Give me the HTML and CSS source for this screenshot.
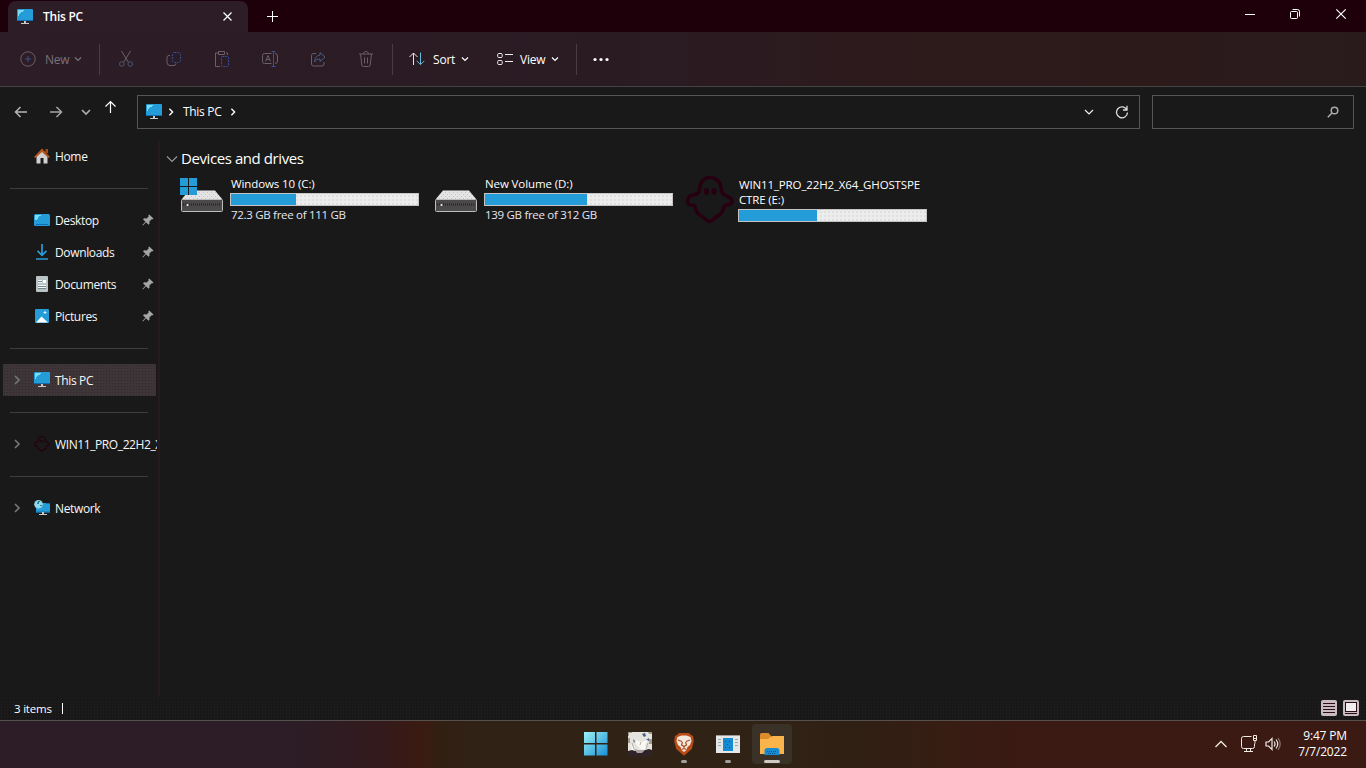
FILE: index.html
```html
<!DOCTYPE html>
<html lang="en">
<head>
<meta charset="utf-8">
<title>This PC</title>
<link rel="stylesheet" href="styles.css">
</head>
<body>
<svg class="defs" width="0" height="0">
  <defs>
    <pattern id="dots" width="4" height="4" patternUnits="userSpaceOnUse"><path d="M0 0h1v1H0zM2 2h1v1H2z" fill="#aaa"/></pattern>
    <symbol id="pc" viewBox="0 0 16 16"><rect x="0" y="0" width="16" height="12" rx="1" fill="#239cd8"/><path d="M0 11h16v1H0z" fill="#126db0"/><path d="M1 1h6v1H6v1H4v1H3v1H2v2H1z" fill="#79dcf0"/><path d="M7 12h2v2h3v1H4v-1h3z" fill="#c9c9c9"/></symbol>
    <symbol id="chev" viewBox="0 0 8 8"><path d="M1 2.500l3 3 3-3" fill="none" stroke="currentColor" stroke-width="1.200"/></symbol>
    <symbol id="right" viewBox="0 0 8 10"><path d="M2 1l4 4-4 4" fill="none" stroke="currentColor" stroke-width="1.700"/></symbol>
    <symbol id="pin" viewBox="0 0 12 12"><path d="M7.200.5l4.300 4-1.200 1.100-.9-.2-2 2 .1 2.300-1 1L4 8.200 1 11.500l-.6-.5 3-3.300L1 5.300l1-1 2.500.2 2.200-2.100-.4-.9z" fill="#a5a5a5"/></symbol>
    <symbol id="ghost" viewBox="0 0 48 48"><path d="M24 1.500c-7 0-10 5-10.500 11.500C13 19 9 18 5 19.500c-4 2-4 7-2 9 2 1 5 0 6 2 1 3 0 5 4 8 4 2 6 5 9 6.500 3 1 5-1 7-3 3-3 6-3 7-6 2-3 1-6 4-7 4 0 6-1 6-4 0-4-5-4-8-6.500-4-3-2-6-4-11C32 4 29 1.500 24 1.500z" fill="none" stroke="#260010" stroke-width="3.500"/><ellipse cx="20.500" cy="15.500" rx="2.700" ry="3.400" fill="#260010"/><ellipse cx="28" cy="15.500" rx="2.700" ry="3.400" fill="#260010"/></symbol>
    <symbol id="drive" viewBox="0 0 42 22"><path d="M8 .5h26l7.500 9H.5z" fill="#e4e4e4"/><path d="M8 .5h26l7.500 9H.5z" fill="url(#dots)" opacity=".6"/><rect x=".5" y="9.500" width="41" height="12" rx="1" fill="#4b4949" stroke="#bdbdbd"/><path d="M2 14.500h38" stroke="#262626" stroke-width="2" stroke-dasharray="1 1"/><circle cx="6.500" cy="15" r="1" fill="#fff"/></symbol>
  </defs>
</svg>

<header class="titlebar">
  <div class="tab">
    <svg class="i16"><use href="#pc"/></svg>
    <span class="tab-name">This PC</span>
    <svg class="tab-x" width="11" height="11" viewBox="0 0 11 11"><path d="M1.500 1.500l8 8M9.500 1.500l-8 8" stroke="#fff" stroke-width="1.200"/></svg>
  </div>
  <svg class="tab-add" width="11" height="11" viewBox="0 0 11 11"><path d="M5.500 0v11M0 5.500h11" stroke="#fff"/></svg>
  <div class="controls">
    <svg width="12" height="12" viewBox="0 0 12 12"><path d="M2 6.500h10" stroke="#fff"/></svg>
    <svg width="12" height="12" viewBox="0 0 12 12"><rect x="1.500" y="3.500" width="7" height="7" rx="1" fill="none" stroke="#fff"/><path d="M3.500 1.500h5a2 2 0 0 1 2 2v5" fill="none" stroke="#fff"/></svg>
    <svg width="12" height="12" viewBox="0 0 12 12"><path d="M1.300 1.300l9.400 9.400M10.700 1.300l-9.400 9.400" stroke="#fff" stroke-width="1.200"/></svg>
  </div>
</header>

<div class="toolbar">
  <div class="new dim">
    <svg width="16" height="16" viewBox="0 0 16 16" fill="none"><circle cx="8" cy="8" r="7.200" stroke="#6b6067"/><path d="M8 5v6M5 8h6" stroke="#3a5387"/></svg>
    <span class="cmd">New</span><svg class="i8"><use href="#chev"/></svg>
  </div>
  <i class="vsep"></i>
  <div class="tools">
    <svg viewBox="0 0 16 18"><g fill="none" stroke="#6b6067"><path d="M3.500 1l6.700 11M12.500 1L5.800 12"/></g><g fill="none" stroke="#4f5579"><circle cx="3.800" cy="14" r="2.300"/><circle cx="12.200" cy="14" r="2.300"/></g></svg>
    <svg viewBox="0 0 16 18" fill="none"><path d="M4 5.500H3a2 2 0 0 0-2 2v5a3 3 0 0 0 3 3h4a2 2 0 0 0 2-2" stroke="#6b6067"/><rect x="6.500" y="2.500" width="8" height="10" rx="2" stroke="#34519a" stroke-dasharray="2 1"/></svg>
    <svg viewBox="0 0 16 18" fill="none"><path d="M4 3H1.500v13.500H6M12 3h1.500v2M4.500 1.500h6v3h-6z" stroke="#6b6067"/><rect x="7.500" y="6.500" width="7" height="10" rx="1" stroke="#34519a" stroke-dasharray="2 1"/></svg>
    <svg viewBox="0 0 16 18" fill="none"><path d="M9.500 3.500H2.500a2 2 0 0 0-2 2v6a2 2 0 0 0 2 2h7M13 3.500a2.500 2.500 0 0 1 2.500 2.500v5a2.500 2.500 0 0 1-2.500 2.500M3.500 11.500l2.500-6 2.500 6M4.500 9.500h3" stroke="#6b6067"/><path d="M9.500 1.500h4M9.500 16.500h4M11.500 1.500v15" stroke="#34519a"/></svg>
    <svg viewBox="0 0 16 18" fill="none"><path d="M6 3.500H3.500a2 2 0 0 0-2 2V14a2 2 0 0 0 2 2H12a2 2 0 0 0 2-2v-2" stroke="#6b6067"/><path d="M10 2.500l5 4.500-5 4.500V9c-3 0-4.500 1-5.500 3 .3-4 2-6.500 5.500-7z" stroke="#485c84"/></svg>
    <svg viewBox="0 0 16 18" fill="none" stroke="#6b6067"><path d="M1 4h14M5.500 4c0-3.300 5-3.300 5 0M2.500 4l1.300 11q.2 1.500 1.700 1.500h5q1.500 0 1.700-1.500L13.500 4M6.500 7.500v6M9.500 7.500v6"/></svg>
  </div>
  <i class="vsep"></i>
  <div class="sort">
    <svg width="16" height="16" viewBox="0 0 16 16" fill="none"><path d="M4.500 14V2M.5 6l4-4 4 4" stroke="#e8e4e8"/><path d="M11.500 1.500v12M7.700 9.800l3.800 3.800 3.800-3.800" stroke="#63bdd8"/></svg>
    <span class="cmd">Sort</span><svg class="i8"><use href="#chev"/></svg>
  </div>
  <div class="view">
    <svg width="16" height="16" viewBox="0 0 16 16" fill="none" stroke="#eee"><rect x=".7" y="2.500" width="4.500" height="4" rx="1"/><rect x=".7" y="9.500" width="4.500" height="4" rx="1"/><path d="M8 3.500h8M8 10.500h8"/></svg>
    <span class="cmd">View</span><svg class="i8"><use href="#chev"/></svg>
  </div>
  <i class="vsep"></i>
  <svg class="more" width="18" height="6" viewBox="0 0 18 6" fill="#fff"><circle cx="3" cy="3.500" r="1.600"/><circle cx="9" cy="3.500" r="1.600"/><circle cx="15" cy="3.500" r="1.600"/></svg>
</div>

<nav class="navbar">
  <div class="arrows">
    <svg width="14" height="14" viewBox="0 0 14 14"><path d="M13 7H1.500M6.500 2l-5 5 5 5" fill="none" stroke="#b5b5b5" stroke-width="1.500"/></svg>
    <svg width="14" height="14" viewBox="0 0 14 14"><path d="M1 7h11.500M7.500 2l5 5-5 5" fill="none" stroke="#a5a5a5" stroke-width="1.500"/></svg>
    <svg class="recent" width="10" height="10" viewBox="0 0 10 10"><path d="M1 3l4 4 4-4" fill="none" stroke="#b0b0b0" stroke-width="1.600"/></svg>
    <svg class="up" width="12" height="14" viewBox="0 0 12 14"><path d="M6.500 13V1.500M1.500 6.500l5-5 5 5" fill="none" stroke="#fff" stroke-width="1.200"/></svg>
  </div>
  <div class="address">
    <svg class="i16"><use href="#pc"/></svg>
    <svg class="crumb"><use href="#right"/></svg>
    <span class="addr-text">This PC</span>
    <svg class="crumb"><use href="#right"/></svg>
    <svg class="addr-down" width="10" height="10" viewBox="0 0 10 10"><path d="M1 3l4 4 4-4" fill="none" stroke="#eee" stroke-width="1.200"/></svg>
    <svg width="14" height="14" viewBox="0 0 14 14"><path d="M12 5A5.500 5.500 0 1 0 12.500 7.500M12 .8V5H8" fill="none" stroke="#ddd" stroke-width="1.300"/></svg>
  </div>
  <div class="search"><svg width="12" height="12" viewBox="0 0 12 12"><circle cx="7.500" cy="4.500" r="3.300" fill="none" stroke="#aaa" stroke-width="1.500"/><path d="M5 7L.8 11.200" stroke="#aaa" stroke-width="1.600"/></svg></div>
</nav>

<div class="body">
  <aside class="side">
    <div class="row"><svg class="i16" viewBox="0 0 16 16"><path d="M2.500 8L8 3l5.500 5v7.500h-4V10h-3v5.500h-4z" fill="#d0d0d0"/><path d="M0 9l8-8.500 8 8.500-1.500 1L8 4 1.500 10z" fill="#b4561d"/><path d="M11.500 1H14v4h-2.500z" fill="#a34a18"/></svg><span>Home</span></div>
    <div class="line"></div>
    <div class="row"><svg class="i16" viewBox="0 0 16 16"><rect x="0" y="2" width="16" height="12" rx="1.500" fill="#239cd8"/><path d="M1 3h6v1H5v1H4v2H3v1H1z" fill="#79dcf0"/><path d="M2 12.500h12" stroke="#126db0"/></svg><span>Desktop</span><svg class="pin"><use href="#pin"/></svg></div>
    <div class="row"><svg class="i16" viewBox="0 0 16 16"><path d="M8 0v11M3.500 6.800L8 11.300l4.500-4.500M2 15h12" fill="none" stroke="#2b9bd8" stroke-width="1.700"/></svg><span>Downloads</span><svg class="pin"><use href="#pin"/></svg></div>
    <div class="row"><svg class="i16" viewBox="0 0 16 16"><rect x="2" y="0" width="12" height="16" rx="1" fill="#b9c3c6"/><path d="M4 4.500h4M4 6.500h4M4 9.500h8M4 11.500h8" stroke="#f4f7f8"/><path d="M4 5.500h4M4 10.500h8M4 12.500h8" stroke="#75858b"/><rect x="9" y="4" width="3" height="3" fill="#fff"/></svg><span>Documents</span><svg class="pin"><use href="#pin"/></svg></div>
    <div class="row"><svg class="i16" viewBox="0 0 16 16"><rect x="1" y="1" width="14" height="14" rx="1" fill="#239cd8"/><path d="M2 14.500l5.500-6 6.500 6z" fill="#fff"/><path d="M11 3v3M9.500 4.500h3" stroke="#d7f4ff"/></svg><span>Pictures</span><svg class="pin"><use href="#pin"/></svg></div>
    <div class="line"></div>
    <div class="row sel"><svg class="exp"><use href="#right"/></svg><svg class="i16"><use href="#pc"/></svg><span>This PC</span></div>
    <div class="line"></div>
    <div class="row"><svg class="exp"><use href="#right"/></svg><svg class="i16"><use href="#ghost"/></svg><span class="long">WIN11_PRO_22H2_X64</span></div>
    <div class="line"></div>
    <div class="row"><svg class="exp"><use href="#right"/></svg><svg class="i16" viewBox="0 0 16 16"><path d="M2 3h14v9.500H2z" fill="#239cd8"/><path d="M2 11.500h14v1H2zM12 3h4v1h-4z" fill="#126db0"/><path d="M8 12h2v2h3v1H5v-1h3z" fill="#c9c9c9"/><circle cx="4.500" cy="4.300" r="4.300" fill="#8fd9e6"/><path d="M4 1h2v1H5v2H3zM6 5h2v1H6z" fill="#2a7998"/></svg><span>Network</span></div>
  </aside>
  <main class="content">
    <h2 class="group"><svg width="12" height="12" viewBox="0 0 12 12"><path d="M1 3.500l5 5 5-5" fill="none" stroke="#999" stroke-width="1.100"/></svg><span>Devices and drives</span></h2>
    <div class="drives">
      <section class="drive">
        <svg class="dicon" viewBox="0 0 48 48"><use href="#drive" x="1" y="14" width="42" height="22"/><path d="M0 2h17v17H0z" fill="#239cd8"/><path d="M8.500 2v17M0 10.500h17" stroke="#191919"/></svg>
        <div class="info"><div class="name">Windows 10 (C:)</div><div class="bar"><i style="width:35%"></i></div><div class="free">72.3 GB free of 111 GB</div></div>
      </section>
      <section class="drive">
        <svg class="dicon" viewBox="0 0 48 48"><use href="#drive" x="1" y="14" width="42" height="22"/></svg>
        <div class="info"><div class="name">New Volume (D:)</div><div class="bar"><i style="width:54.500%"></i></div><div class="free">139 GB free of 312 GB</div></div>
      </section>
      <section class="drive ghost">
        <svg class="dicon"><use href="#ghost"/></svg>
        <div class="info"><div class="name caps">WIN11_PRO_22H2_X64_GHOSTSPE<br>CTRE (E:)</div><div class="bar"><i style="width:41.700%"></i></div></div>
      </section>
    </div>
  </main>
</div>

<footer class="status">
  <span class="count">3 items</span><i class="caret"></i>
  <div class="modes">
    <svg width="16" height="16" viewBox="0 0 16 16"><rect width="16" height="16" rx="2" fill="#c9bcc0"/><path d="M2 3.500h12M2 6.500h12M2 9.500h12M2 12.500h12" stroke="#2b0c18"/></svg>
    <svg width="16" height="16" viewBox="0 0 16 16"><rect width="16" height="16" rx="2" fill="#c9bcc0"/><rect x="2.500" y="2.500" width="11" height="9" fill="#f2eef0" stroke="#2b0c18"/><path d="M2 13.500h12" stroke="#2b0c18"/></svg>
  </div>
</footer>

<div class="taskbar">
  <div class="apps">
    <div class="app"><svg width="24" height="24" viewBox="0 0 24 24"><defs><linearGradient id="win" x1="0" y1="0" x2="1" y2="1"><stop offset="0" stop-color="#9df2f6"/><stop offset="1" stop-color="#168fd5"/></linearGradient></defs><path d="M0 0h11v11H0zM12.500 0h11v11h-11zM0 12.500h11v11H0zM12.500 12.500h11v11h-11z" fill="url(#win)"/></svg></div>
    <div class="app"><svg width="24" height="24" viewBox="0 0 24 24"><rect width="24" height="24" fill="#e6e4df"/><path d="M0 0h4v1H1v3H0zM0 6h2v5H0zM21 7h3v5h-3zM20 0h4v2h-3z" fill="#a19d95"/><path d="M14 2l3-1 1 3-2 1zM18 8l3-2v3zM5 7l2 2-1 2z" fill="#4a5f88"/><path d="M3 12l5 5-4 2zM8 8l5 2 7-2-3 5 2 5-7-1-4-5z" fill="#fbf9f4"/><path d="M4 11l2 6 3 1M13 10l-1 3M20 11l-2 6" fill="none" stroke="#b5afa9"/><path d="M0 19l4-1 3 1 10-1 4-1 3 1v6H0z" fill="#302229"/><path d="M7 18h10l-3 3H9z" fill="#a8a0a2"/></svg></div>
    <div class="app run"><svg width="20" height="24" viewBox="0 0 20 24"><path d="M5 1h10l2 2 2 1 .8 5-2 8L10 23.800 2.200 17 .2 9 1 4l2-1z" fill="#b84b16"/><path d="M3.500 5l4-1.500h5l4 1.500 1 4-1.500 4-2.500 2-1 3-2.500 2-2.500-2-1-3L4 13 2.500 9z" fill="#f3e8dd"/><path d="M4 8l4 1.500M16 8l-4 1.500M8.500 10L7.500 13l2.500 1.500 2.500-1.500-1-3M10 14.500v2M7.500 17.500l2.500-1 2.500 1" fill="none" stroke="#a7481f" stroke-width="1.200"/></svg></div>
    <div class="app run"><svg width="24" height="18" viewBox="0 0 24 18"><rect width="24" height="18" fill="#e4e6e8"/><path d="M0 .5h24" stroke="#999"/><rect x="7" y="3" width="10" height="13" fill="#168bd2"/><path d="M2 4.500h3M2 7.500h3M2 10.500h3M19 4.500h3M19 7.500h3M19 10.500h3" stroke="#9aa"/><path d="M9 6h1v1H9zM13 6h1v1h-1zM11 9h1v1h-1zM9 12h1v1H9zM13 12h1v1h-1z" fill="#0a4f91"/></svg></div>
    <div class="app run on"><svg width="24" height="22" viewBox="0 0 24 22"><path d="M0 1.500Q0 0 1.500 0h7L11 3v5H0z" fill="#e08b2a"/><path d="M0 6h8l4-3h12v18H0z" fill="#f9b54b"/><path d="M4.500 22v-4q0-3 3-3h9q3 0 3 3v4z" fill="#168bd2"/><path d="M7 18.500h10M8 20.500h8" stroke="#0a5897" stroke-dasharray="1 1"/></svg></div>
  </div>
  <div class="tray">
    <svg class="t-up" width="14" height="10" viewBox="0 0 14 10"><path d="M1.500 8L7 2.500 12.500 8" fill="none" stroke="#f2ebe4" stroke-width="1.300"/></svg>
    <svg class="t-net" width="17" height="18" viewBox="0 0 17 18" fill="none" stroke="#f2ebe4"><path d="M10.500 1.500h-8q-2 0-2 2v8q0 2 2 2h9q2 0 2-2v-3M3 16.500h9M5.500 13.500v3M9.500 13.500v3M12.500.5h3v5h-3zM12.500 3.500h3M14 5.500v3"/></svg>
    <svg class="t-vol" width="16" height="14" viewBox="0 0 16 14" fill="none" stroke="#f2ebe4" stroke-width="1.200"><path d="M1 5h2.500L7 1.500v11L3.500 9H1zM9 4.500q2 2.500 0 5M11 2.500q3.500 4.500 0 9"/><path d="M13 1q4.500 6 0 12" stroke="#8c766c"/></svg>
    <div class="clock"><div>9:47 PM</div><div>7/7/2022</div></div>
  </div>
</div>
</body>
</html>
```
FILE: styles.css
```css
* { box-sizing: border-box; }
body {
  margin: 0; width: 1366px; height: 768px; overflow: hidden;
  display: flex; flex-direction: column;
  background: #191919; color: #fff;
  font: 12px/16px "Open Sans", "Noto Sans", sans-serif;
}
svg { flex: none; display: block; }
.defs { position: absolute; }
.i16 { width: 16px; height: 16px; }
.i8 { width: 8px; height: 8px; }
span { white-space: nowrap; }

.titlebar {
  height: 32px; display: flex; flex: none;
  background: radial-gradient(circle, #2b0b12 .5px, transparent .7px) 0 0 / 4px 4px, #1e000b;
}
.tab {
  width: 240px; height: 31px; margin: 1px 0 0 8px; padding: 0 15px 0 9px;
  border-radius: 8px 8px 0 0; background: #2c1d26;
  display: flex; align-items: center;
}
.tab-name { margin: 1px 0 0 10px; font-weight: 600; letter-spacing: -.25px; width: 60px; }
.tab-x { margin-left: auto; }
.tab-add { margin: 11px 0 0 19px; }
.controls { display: flex; gap: 34px; margin: 8px 19px 0 auto; }

.toolbar {
  height: 55px; flex: none; display: flex; align-items: center;
  background: linear-gradient(90deg, #2c1d26, #2a1b23 45%, #2c1a1c 65%, #2c1a1b 85%, #291b1c);
  border-bottom: 1px solid #444;
}
.vsep { width: 1px; height: 31px; background: #493d44; flex: none; }
.new, .sort, .view { display: flex; align-items: center; flex: none; }
.new { width: 99px; padding-left: 20px; }
.dim { color: #7c7178; }
.cmd { width: 24px; margin: 2px 5px 0 9px; letter-spacing: -.2px; font-weight: 500; }
.tools { width: 292px; padding-left: 18px; display: flex; gap: 32px; }
.tools svg { width: 16px; height: 18px; }
.sort { width: 87px; padding-left: 16px; }
.sort .cmd { width: 23px; margin-left: 8px; }
.view { width: 96px; padding-left: 17px; }
.view .cmd { width: 27px; margin-left: 7px; margin-right: 4px; }
.more { margin-left: 15px; }

.navbar { height: 53px; flex: none; display: flex; padding-top: 8px; }
.arrows { width: 137px; height: 34px; padding-left: 14px; display: flex; align-items: center; }
.arrows svg + svg { margin-left: 21px; }
.arrows .recent { margin-left: 18px; }
.arrows .up { margin: 0 0 10px 13px; }
.address {
  width: 1003px; height: 34px; border: 1px solid #555; padding: 0 10px 0 8px;
  display: flex; align-items: center; letter-spacing: -.3px;
}
.crumb { width: 8px; height: 8px; }
.address .i16 { margin-right: 5px; }
.addr-text { margin: 0 6px 0 8px; width: 40px; }
.addr-down { margin: 0 21px 0 auto; }
.search {
  width: 202px; height: 34px; margin-left: 12px; border: 1px solid #555;
  display: flex; align-items: center; justify-content: flex-end; padding-right: 14px;
}

.body { height: 557px; display: flex; flex: none; }
.side { width: 160px; border-right: 2px solid #271a1c; }
.row { height: 32px; display: flex; align-items: center; padding-left: 34px; color: #f7f7f7; }
.row .i16 { margin-right: 5px; }
.row span { letter-spacing: -.35px; padding-top: 1px; }
.row .long { width: 102px; overflow: hidden; letter-spacing: -.4px; }
.row:has(.exp) { padding-left: 13px; }
.exp { width: 8px; height: 10px; margin-right: 13px; color: #757575; }
.pin { width: 12px; height: 12px; margin: 0 4px 0 auto; }
.line { height: 32px; padding: 16px 10px 0 10px; }
.line::before { content: ""; display: block; height: 1px; background: #3e3e3e; }
.sel {
  width: 153px; margin-left: 3px; height: 32px;
  background: radial-gradient(circle, #2f292c .6px, transparent .8px) 0 0 / 3px 3px, #3d3538;
}
.row:has(.exp).sel { padding-left: 10px; }

.content { flex: 1; padding: 9px 0 0 6px; }
.group { margin: 0; height: 18px; display: flex; align-items: center; font-size: 15px; font-weight: 400; }
.group span { margin-left: 3px; letter-spacing: -.42px; }
.group svg { margin-top: 2px; }
.drives { display: flex; margin: 9px 0 0 14px; }
.drive { width: 254px; display: flex; }
.dicon { width: 48px; height: 48px; }
.ghost .dicon { margin-left: -2px; margin-right: 2px; }
.info { width: 189px; margin-left: 2px; }
.name, .free { padding-left: 1px; font-size: 11.5px; line-height: 15px; white-space: nowrap; letter-spacing: -.1px; }
.name { height: 17px; }
.caps { height: 33px; padding-top: 1px; letter-spacing: -.14px; }
.bar { height: 13px; border: 1px solid #c4c4c4; background: radial-gradient(circle, #c4c4c4 .5px, transparent .8px) 0 0 / 4px 4px, #ececec; }
.bar i { display: block; height: 100%; background: #239cd8; }
.free { padding-top: 1px; color: #e6e6f0; letter-spacing: -.3px; }

.status {
  height: 24px; flex: none; display: flex; align-items: center; padding: 0 7px 0 14px;
  background: radial-gradient(circle, #261f24 .5px, transparent .8px) 0 0 / 3px 3px, #191819;
  border-bottom: 1px solid #55504e;
}
.count { width: 48px; letter-spacing: -.2px; font-size: 11.5px; }
.caret { width: 1px; height: 11px; background: #fff; }
.modes { display: flex; gap: 6px; margin: 0 0 1px auto; }

.taskbar {
  height: 47px; flex: none; display: flex; justify-content: flex-end;
  background: linear-gradient(90deg, #2c1d26 0, #2c1d26 290px, #301b21 350px, #351a1a 385px, #3a1b13 415px, #3a1c13 427px, #321f13 437px, #302214 470px, #302214 800px, #301f14 865px, #381d13 950px, #3a1a13 1020px, #3a1a13);
}
.apps { display: flex; gap: 4px; margin: 3px auto 0 575.5px; }
.app { width: 40px; height: 40px; border-radius: 4px; display: flex; align-items: center; justify-content: center; position: relative; }
.on { background: #3a3226; }
.run::after { content: ""; position: absolute; left: 17px; bottom: 1px; width: 6px; height: 3px; border-radius: 2px; background: #a6a09b; }
.run.on::after { left: 12px; width: 16px; background: #cfc9c4; }
.tray { display: flex; align-items: center; padding-right: 19px; }
.t-up { margin-top: -1px; }
.t-net { margin: -1px 0 0 13px; }
.t-vol { margin: -1px 0 0 7px; }
.clock { width: 66px; text-align: right; letter-spacing: -.15px; margin-top: -2px; }
```
